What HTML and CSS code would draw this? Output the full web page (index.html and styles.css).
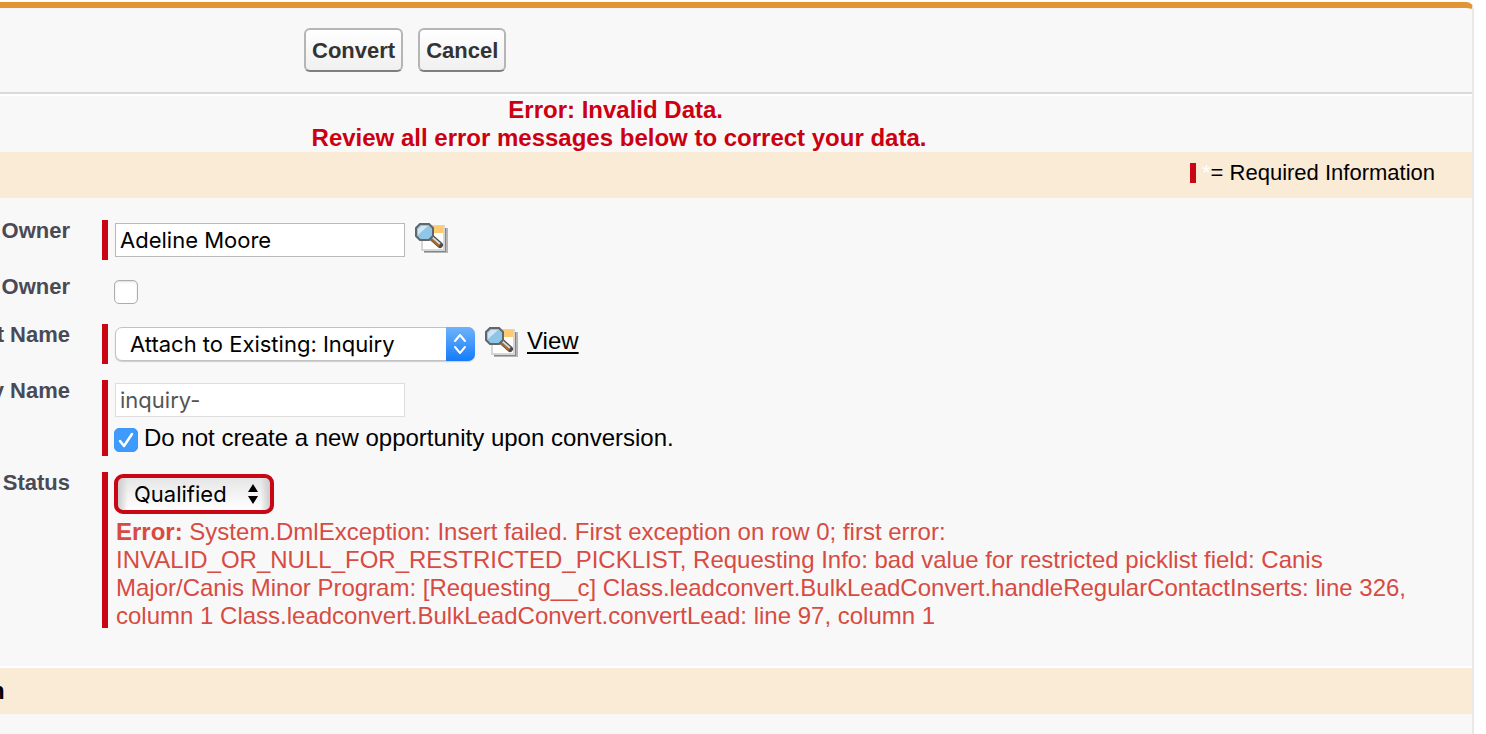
FILE: index.html
```html
<!DOCTYPE html>
<html lang="en">
<head>
    <meta charset="UTF-8">
    <meta name="viewport" content="width=device-width, initial-scale=1.0">
    <title>Convert Lead</title>
    <link rel="stylesheet" href="styles.css">
</head>
<body>
    <svg class="hidden" aria-hidden="true">
        <symbol id="lookup" viewBox="0 0 34 32">
            <path d="M10 6h24v25H10z" fill="#b5b5b5"/>
            <path d="M10 6h22v24H10z" fill="#858585"/>
            <path d="M7 3h24v26H7z" fill="#d6d6d6"/>
            <path d="M9 5h20v22H9z" fill="#fff"/>
            <path d="M18 4h11v7H18z" fill="#fdcb72"/>
            <path d="M17 15l9 8" stroke="#4c4c4c" stroke-width="6" stroke-linecap="round"/>
            <path d="M17 17l8 7" stroke="#b5651d" stroke-width="2"/>
            <path d="M18 15l8 7" stroke="#d9d9d9" stroke-width="2"/>
            <path d="M6 2h9l4 4v8l-4 4H6l-4-4V6z" fill="#8fc6e6" stroke="#5f666c" stroke-width="2"/>
            <path d="M4 10V7l3-3h7L4 13z" fill="#cfe7f5"/>
        </symbol>
    </svg>

    <form class="panel">
        <div class="buttons">
            <button type="button">Convert</button>
            <button type="button">Cancel</button>
        </div>

        <div class="page-error">Error: Invalid Data.&nbsp;<br>Review all error messages below to correct your data.</div>

        <div class="band legend">
            <span class="required-mark"></span>
            <span><span class="star">*</span>= Required Information</span>
        </div>

        <div class="fields">
            <div class="row">
                <label class="name" for="owner">Owner</label>
                <div class="field required">
                    <div class="line">
                        <input type="text" class="text" id="owner" value="Adeline Moore">
                        <a href="#" class="lookup" aria-label="Owner Lookup"><svg><use href="#lookup"/></svg></a>
                    </div>
                </div>
            </div>

            <div class="row">
                <label class="name" for="notify">Owner</label>
                <div class="field">
                    <div class="option">
                        <span class="check">
                            <input type="checkbox" id="notify">
                        </span>
                    </div>
                </div>
            </div>

            <div class="row">
                <label class="name" for="account">t Name</label>
                <div class="field required">
                    <div class="line">
                        <span class="pick">
                            <select id="account">
                                <option>Attach to Existing: Inquiry</option>
                            </select>
                            <svg class="stepper" viewBox="0 0 29 34">
                                <path d="M9 14l5-6 5 6M9 20l5 6 5-6" fill="none" stroke="#fff" stroke-width="2" stroke-linecap="round" stroke-linejoin="round"/>
                            </svg>
                        </span>
                        <a href="#" class="lookup" aria-label="Account Lookup"><svg><use href="#lookup"/></svg></a>
                        <a href="#" class="view">View</a>
                    </div>
                </div>
            </div>

            <div class="row">
                <label class="name" for="opportunity">y Name</label>
                <div class="field required">
                    <div class="line">
                        <input type="text" class="text" id="opportunity" value="inquiry-" disabled>
                    </div>
                    <div class="option below">
                        <span class="check">
                            <input type="checkbox" id="noOpportunity" checked>
                            <svg viewBox="0 0 24 24">
                                <path d="M6 13l4 5 8-12" fill="none" stroke="#fff" stroke-width="2.5" stroke-linecap="round" stroke-linejoin="round"/>
                            </svg>
                        </span>
                        <label for="noOpportunity">Do not create a new opportunity upon conversion.</label>
                    </div>
                </div>
            </div>

            <div class="row">
                <label class="name" for="status">Status</label>
                <div class="field required">
                    <span class="pick status">
                        <select id="status">
                            <option>Qualified</option>
                        </select>
                        <svg class="arrows" viewBox="0 0 10 20">
                            <path d="M5 0l5 8H0zM5 20l5-8H0z"/>
                        </svg>
                    </span>
                    <div class="field-error"><strong>Error:</strong> System.DmlException: Insert failed. First exception on row 0; first error: INVALID_OR_NULL_FOR_RESTRICTED_PICKLIST, Requesting Info: bad value for restricted picklist field: Canis Major/Canis Minor Program: [Requesting__c] Class.leadconvert.BulkLeadConvert.handleRegularContactInserts: line 326, column 1 Class.leadconvert.BulkLeadConvert.convertLead: line 97, column 1</div>
                </div>
            </div>
        </div>

        <div class="band section">
            <h3>n</h3>
        </div>
    </form>
</body>
</html>
```
FILE: styles.css
```css
* {
    box-sizing: border-box;
}
body {
    margin: 0;
    padding: 2px 12px 0 0;
    background: #fff;
    color: #000;
    font-family: "Liberation Sans", Arial, sans-serif;
    font-size: 24px;
    line-height: 28px;
    overflow: hidden;
}
.hidden {
    display: none;
}
.panel {
    min-height: calc(100vh - 2px);
    background: #f8f8f8;
    border-top: 6px solid #e39433;
    border-right: 2px solid #e9e9e9;
    border-top-right-radius: 8px;
}
.buttons {
    display: flex;
    gap: 15px;
    padding: 20px 0 20px 304px;
    border-bottom: 2px solid #dadada;
}
button {
    height: 44px;
    padding: 1px 6px 0;
    border: 2px solid #b5b5b5;
    border-bottom-color: #7f7f7f;
    border-radius: 6px;
    background: linear-gradient(#fff, #f0f0f0);
    color: #333;
    font: bold 22px "Liberation Sans", Arial, sans-serif;
}
.page-error {
    padding-right: 234px;
    border-top: 2px solid #fff;
    color: #cc0011;
    font-weight: bold;
    text-align: center;
}
.band {
    display: flex;
    align-items: center;
    height: 46px;
    background: #faebd7;
}
.legend {
    justify-content: flex-end;
    gap: 6px;
    padding: 0 37px 4px 0;
    font-size: 22px;
}
.required-mark {
    width: 6px;
    height: 20px;
    background: #c90613;
}
.star {
    color: #fff;
}

/* form rows */
.fields {
    display: flex;
    flex-direction: column;
    gap: 16px;
    padding: 22px 37px 38px 0;
}
.row {
    display: grid;
    grid-template-columns: 70px 1fr;
    column-gap: 32px;
}
.name {
    display: flex;
    justify-content: flex-end;
    color: #4a4a56;
    font-size: 22px;
    font-weight: bold;
    line-height: 22px;
    white-space: pre;
}
.field {
    min-height: 32px;
    padding-left: 6px;
    border-left: 6px solid transparent;
}
.field.required {
    min-height: 40px;
    border-left-color: #c90613;
}
.line {
    display: flex;
    align-items: flex-start;
    gap: 9px;
    padding-top: 3px;
}
.text {
    width: 290px;
    height: 34px;
    margin-left: 1px;
    padding: 0 4px;
    border: 1px solid #b9b9b9;
    background: #fff;
    color: #000;
    font: 22px Inter, sans-serif;
}
.text:disabled {
    border-color: #dedede;
    color: #555;
}
.lookup svg {
    display: block;
    width: 34px;
    height: 32px;
    margin-top: -1px;
}
.view {
    color: #000;
    text-decoration: underline;
    text-underline-offset: 3px;
    text-decoration-thickness: 2px;
}

/* checkboxes */
.check {
    display: grid;
}
.check input,
.check svg {
    grid-area: 1 / 1;
    width: 24px;
    height: 24px;
    margin: 0;
}
.check input {
    appearance: none;
    border: 1px solid #adadad;
    border-radius: 5px;
    background: #fff;
    box-shadow: inset 0 1px 2px #ddd;
}
.check input:checked {
    border-color: #3b99fc;
    background: #3e9afb;
    box-shadow: none;
}
.check svg {
    pointer-events: none;
}
.option {
    display: flex;
    align-items: flex-end;
    gap: 6px;
    padding: 4px 0;
}
.option.below {
    padding-top: 7px;
}

/* drop-downs */
.pick {
    display: inline-grid;
    align-items: center;
    width: 360px;
    margin-left: 1px;
}
.pick select {
    grid-area: 1 / 1;
    width: 100%;
    height: 34px;
    padding: 0 14px;
    appearance: none;
    border: 1px solid #c2c2c2;
    border-radius: 7px;
    background: #fff;
    box-shadow: 0 1px 1px #ccc;
    color: #000;
    font: 22px Inter, sans-serif;
}
.pick svg {
    grid-area: 1 / 1;
    justify-self: end;
    pointer-events: none;
}
.stepper {
    width: 29px;
    height: 34px;
    border-radius: 0 7px 7px 0;
    background: linear-gradient(#6fb3fa, #147bfb);
}
.pick.status {
    display: grid;
    width: 160px;
    margin: 2px 0 0;
}
.status select {
    height: 40px;
    padding: 0 16px;
    border: 4px solid #c90613;
    border-radius: 9px;
    background: linear-gradient(90deg, #ccc, transparent 10px, transparent calc(100% - 10px), #ccc), linear-gradient(#e6e6e6, #fff);
    box-shadow: none;
}
.arrows {
    width: 10px;
    height: 20px;
    margin-right: 16px;
}
.field-error {
    margin: 4px 0 -2px 2px;
    color: #d74b42;
}

.section {
    height: 48px;
    border-top: 2px solid #fff;
}
.section h3 {
    margin: 0 0 0 -10px;
    font-size: 24px;
}
```
